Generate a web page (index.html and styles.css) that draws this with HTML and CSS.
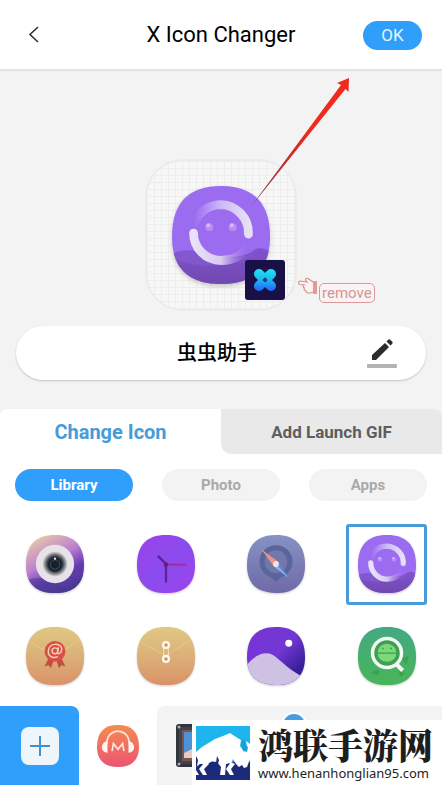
FILE: index.html
```html
<!DOCTYPE html>
<html lang="en">
<head>
<meta charset="utf-8">
<meta name="viewport" content="width=device-width, initial-scale=1">
<title>X Icon Changer</title>
<link rel="stylesheet" href="styles.css">
</head>
<body>
<svg class="defs" aria-hidden="true">
  <defs>
    <path id="squircle" d="M50 0C83 0 100 17 100 52C100 85 82 100 50 100C18 100 0 85 0 52C0 17 17 0 50 0Z"/>
    <clipPath id="clip"><use href="#squircle"/></clipPath>
    <linearGradient id="arcTop" x1="0" y1="0" x2="1" y2="0"><stop offset="0" stop-color="#c9b4f6" stop-opacity="0"/><stop offset=".5" stop-color="#cdbaf5"/><stop offset="1" stop-color="#e6e0f5"/></linearGradient>
    <linearGradient id="arcBottom" x1="0" y1="0" x2="1" y2="0"><stop offset="0" stop-color="#e9e2f8"/><stop offset=".5" stop-color="#d8cbef"/><stop offset="1" stop-color="#a37ae4" stop-opacity="0"/></linearGradient>
    <linearGradient id="gHill" x1="0" y1="0" x2="0" y2="1"><stop offset="0" stop-color="#8054cd"/><stop offset="1" stop-color="#7048b0"/></linearGradient>
    <linearGradient id="gLens" x1=".15" y1="0" x2=".7" y2="1"><stop offset="0" stop-color="#e9cfa4"/><stop offset=".45" stop-color="#bd7fd0"/><stop offset=".72" stop-color="#653bb0"/><stop offset="1" stop-color="#493a91"/></linearGradient>
    <radialGradient id="gPupil"><stop offset="0" stop-color="#1c2731"/><stop offset=".6" stop-color="#343d43"/><stop offset="1" stop-color="#e6e2e5"/></radialGradient>
    <linearGradient id="gClock" x1="0" y1="0" x2="1" y2="1"><stop offset="0" stop-color="#9a42ea"/><stop offset=".5" stop-color="#8b4bed"/><stop offset="1" stop-color="#9c43ee"/></linearGradient>
    <linearGradient id="gCompass" x1="0" y1="0" x2="0" y2="1"><stop offset="0" stop-color="#8593c3"/><stop offset="1" stop-color="#7069a8"/></linearGradient>
    <linearGradient id="gMail" x1="0" y1="0" x2="0" y2="1"><stop offset="0" stop-color="#dfc883"/><stop offset=".55" stop-color="#dbae76"/><stop offset="1" stop-color="#db9168"/></linearGradient>
    <linearGradient id="gNight" x1="0" y1="0" x2="1" y2="1"><stop offset="0" stop-color="#7933d7"/><stop offset=".5" stop-color="#7137d3"/><stop offset=".8" stop-color="#39209b"/></linearGradient>
    <linearGradient id="gGreen" x1="0" y1="0" x2="0" y2="1"><stop offset="0" stop-color="#43a982"/><stop offset="1" stop-color="#49b558"/></linearGradient>
    <linearGradient id="gMusic" x1="0" y1="0" x2="0" y2="1"><stop offset="0" stop-color="#f58b50"/><stop offset="1" stop-color="#ec5472"/></linearGradient>
    <linearGradient id="gX" gradientUnits="userSpaceOnUse" x1="0" y1="9" x2="0" y2="31"><stop offset="0" stop-color="#19e6ee"/><stop offset=".5" stop-color="#20b5f2"/><stop offset="1" stop-color="#2563f8"/></linearGradient>
    <linearGradient id="gArrow" gradientUnits="userSpaceOnUse" x1="0" y1="130" x2="99" y2="0"><stop offset="0" stop-color="#8b5ba0"/><stop offset=".12" stop-color="#963e47"/><stop offset=".4" stop-color="#c6302b"/><stop offset=".6" stop-color="#ee2b1d"/></linearGradient>
    <symbol id="smile" viewBox="0 0 100 100">
      <use href="#squircle" fill="#9b6bf0"/>
      <g clip-path="url(#clip)">
        <path d="M0 70C7 64 23 65 40 70C57 75 80 71 84 65C90 62 97 64 100 68V100H0Z" fill="url(#gHill)"/>
        <path d="M0 70C8 64 23 66 40 70C55 75 72 74 86 68C68 83 23 86 0 73Z" fill="#875bd3" opacity=".65"/>
      </g>
      <path d="M22 39C28 24 40 19 50 19A29 29 0 0 1 78 49" fill="none" stroke="url(#arcTop)" stroke-width="9" stroke-linecap="round"/>
      <path d="M22 48A28 28 0 0 0 50 76C63 76 73 70 78 59" fill="none" stroke="url(#arcBottom)" stroke-width="9" stroke-linecap="round"/>
      <circle cx="38" cy="42" r="4" fill="#b78df4"/><circle cx="62" cy="42" r="4" fill="#b78df4"/>
      <circle cx="37" cy="40" r="2" fill="#d4b8fa"/><circle cx="61" cy="40" r="2" fill="#d4b8fa"/>
    </symbol>
  </defs>
</svg>

<div class="app">
  <header class="header">
    <button class="back" aria-label="Back"><svg width="12" height="18" viewBox="0 0 12 18"><path d="M10 1L2 8.500L10 16" fill="none" stroke="#333" stroke-width="1.600"/></svg></button>
    <h1 class="title">X Icon Changer</h1>
    <button class="ok">OK</button>
  </header>

  <section class="stage">
    <div class="preview">
      <svg class="preview-icon" viewBox="0 0 100 100"><use href="#smile"/></svg>
      <svg class="badge" viewBox="0 0 40 40" aria-hidden="true">
        <rect width="40" height="40" rx="3" fill="#181047"/>
        <path d="M14 14L26 26M26 14L14 26" stroke="url(#gX)" stroke-width="10" stroke-linecap="round"/>
        <path d="M20 17L23 20L20 23L17 20Z" fill="#17447f" stroke="#2395dc"/>
      </svg>
      <svg class="arrow" viewBox="0 0 99 130" aria-hidden="true"><path d="M0 130L91 7L87 5L99 0L98.500 14L95.500 11Z" fill="url(#gArrow)"/></svg>
      <button class="remove">
        <svg width="22" height="20" viewBox="0 0 22 20" aria-hidden="true"><path d="M16 5L11 1.500C9 .8 8 2 9 4L10 5L3 4C1 4 1 7 3 7.500L7 8C5.500 9 6 10.500 7.500 11C6.500 12.500 7.500 13.500 9 14C9 15.500 11 16.500 13 16L16 15" fill="#fbf3f3" stroke="#d99393" stroke-width="1.200"/><path d="M16 4H20V17H16Z" fill="#e59a98"/></svg>
        <span class="remove-label">remove</span>
      </button>
    </div>
    <div class="name-box">
      <input class="name" type="text" value="虫虫助手" aria-label="App name">
      <button class="edit" aria-label="Edit name"><svg width="30" height="30" viewBox="0 0 30 30"><path d="M5 22V17L18 5L22 9L9 22ZM19.500 3.500L21.500 1.500Q22.500 1 23.500 2L25.500 4Q26 5 25 6L23.500 7.500Z" fill="#2c2c2e"/><rect y="26" width="30" height="4" rx="1" fill="#b3b3b3"/></svg></button>
    </div>
  </section>

  <main class="panel">
    <nav class="tabs">
      <button class="tab tab-active">Change Icon</button>
      <button class="tab">Add Launch GIF</button>
    </nav>
    <div class="chips">
      <button class="chip chip-active">Library</button>
      <button class="chip">Photo</button>
      <button class="chip">Apps</button>
    </div>
    <div class="icons">
      <button class="cell" aria-label="Camera"><svg class="icon" viewBox="0 0 100 100"><use href="#squircle" fill="url(#gLens)"/><path clip-path="url(#clip)" d="M0 78Q30 68 52 84T100 66V100H0Z" fill="#453b94" opacity=".55"/><circle cx="50" cy="50" r="33" fill="#e6e2e8"/><circle cx="50" cy="50" r="22" fill="url(#gPupil)"/><circle cx="50" cy="51" r="12" fill="#17212d"/><circle cx="50" cy="51" r="8" fill="none" stroke="#3b4655" stroke-width="2"/><circle cx="50" cy="41" r="2" fill="#dbe2e6"/></svg></button>
      <button class="cell" aria-label="Clock"><svg class="icon" viewBox="0 0 100 100"><use href="#squircle" fill="url(#gClock)"/><path d="M50 51H85" stroke="#9f2c96" stroke-width="3"/><path d="M50 82V50L36 36" fill="none" stroke="#5a258e" stroke-width="4"/><circle cx="50" cy="51" r="4" fill="#632078"/></svg></button>
      <button class="cell" aria-label="Compass"><svg class="icon" viewBox="0 0 100 100"><use href="#squircle" fill="url(#gCompass)"/><path d="M41 72H59L50 81Z" fill="#5d6398"/><circle cx="50" cy="46" r="24" fill="#7278ac" stroke="#59659b" stroke-width="9"/><path d="M25 25L54 46L46 54Z" fill="#e99586"/><path d="M54 46L73 75L46 54Z" fill="#5a86d9"/><path d="M50 50L73 75L46 54Z" fill="#8db2ea"/><circle cx="50" cy="50" r="5" fill="#f3e5e6"/></svg></button>
      <button class="cell cell-selected" aria-label="Smile" aria-pressed="true"><svg class="icon" viewBox="0 0 100 100"><use href="#smile"/></svg></button>
      <button class="cell" aria-label="Mail"><svg class="icon" viewBox="0 0 100 100"><use href="#squircle" fill="url(#gMail)"/><path d="M8 27L50 50L92 22" fill="none" stroke="#e4ca90" stroke-width="1.500"/><path d="M39 54L32 68L39 66L43 71L48 57ZM61 54L68 68L61 66L57 71L52 57Z" fill="#bf5143"/><circle cx="50" cy="42" r="18" fill="#d94e48"/><circle cx="50" cy="41" r="5" fill="none" stroke="#f6d0b1" stroke-width="2.500"/><path d="M56 35L54 44Q55 48 60 44C65 34 57 29 49 30C38 31 35 46 43 51Q48 54 55 51" fill="none" stroke="#f6d0b1" stroke-width="2.500"/></svg></button>
      <button class="cell" aria-label="Envelope"><svg class="icon" viewBox="0 0 100 100"><use href="#squircle" fill="url(#gMail)"/><path d="M8 27L50 50L92 22" fill="none" stroke="#e4ca90" stroke-width="1.500"/><path d="M46 31V55M54 31V55" stroke="#f3dfba" stroke-width="2"/><circle cx="50" cy="31" r="5" fill="#c99357" stroke="#fff8ea" stroke-width="4"/><circle cx="50" cy="55" r="5" fill="#c99357" stroke="#fff8ea" stroke-width="4"/></svg></button>
      <button class="cell" aria-label="Gallery"><svg class="icon" viewBox="0 0 100 100"><use href="#squircle" fill="url(#gNight)"/><path clip-path="url(#clip)" d="M0 65C14 49 29 41 44 48C58 57 70 72 91 83L100 86V100H0Z" fill="#cfc1e4"/><circle cx="72" cy="28" r="6" fill="#fff"/></svg></button>
      <button class="cell" aria-label="Search"><svg class="icon" viewBox="0 0 100 100"><use href="#squircle" fill="url(#gGreen)"/><path d="M76 55L87 50L84 65ZM22 79L35 73L36 83ZM70 75L80 80L73 86Z" fill="#3ca04c"/><path d="M65 63L77 75" stroke="#f0faf2" stroke-width="7"/><circle cx="50" cy="45" r="25" fill="#409f54" stroke="#f0faf2" stroke-width="6"/><path d="M34 44A16 15 0 0 1 66 44ZM34 46H66A16 14 0 0 1 34 46Z" fill="#7bd87b"/><circle cx="43" cy="37" r="1.500" fill="#3c9650"/><circle cx="57" cy="37" r="1.500" fill="#3c9650"/></svg></button>
    </div>
  </main>

  <footer class="dock">
    <button class="add" aria-label="Add"><svg width="38" height="38" viewBox="0 0 38 38"><rect width="38" height="38" rx="8" fill="#eef6fc"/><path d="M19 9V29M9 19H29" stroke="#408fcf" stroke-width="2"/></svg></button>
    <button class="pack" aria-label="Music pack"><svg width="42" height="42" viewBox="0 0 100 100"><use href="#squircle" fill="url(#gMusic)"/><path d="M23 46C23 4 77 4 77 46" fill="none" stroke="#ffe8dc" stroke-width="4"/><path d="M25 38V66C7 65 7 41 25 38ZM75 38V66C93 65 93 41 75 38Z" fill="#fff5ee"/><path d="M36 62L39 44L50 58L61 44L64 62" fill="none" stroke="#ffeadd" stroke-width="4"/></svg></button>
    <div class="packs">
      <svg width="42" height="43" viewBox="0 0 42 43" aria-hidden="true"><rect width="42" height="43" rx="3" fill="#30343d"/><rect x="3" y="3" width="36" height="37" fill="#3f444d"/><rect x="6" y="6" width="30" height="31" fill="#76564f"/><rect x="8" y="8" width="26" height="26" fill="#4d91d8"/><path d="M8 29L20 23L34 29V34H8Z" fill="#e8cabe"/><circle cx="3" cy="3" r="1.500" fill="#a9adb5"/><circle cx="3" cy="40" r="1.500" fill="#a9adb5"/></svg>
      <span class="dot"></span>
    </div>
    <div class="brand">
      <svg class="brand-logo" width="54" height="54" viewBox="0 0 54 54" aria-hidden="true">
        <rect width="54" height="54" fill="#1eb5ec"/>
        <path d="M0 36H54V54H0Z" fill="#1b2a7b"/>
        <path d="M0 26L6 21L19 13L27 10L34 7L40 11L45 14L44 20L48 26L51 20L50 15L54 18V33L51 41L48 42L46 39L43 41L40 38L37 33L35 37L30 38L29 49H24L25 41L21 36L16 35L12 38H4L0 41Z" fill="#fff"/>
        <path d="M0 30L2 34L1 40L0 41ZM21 30L23 34L22 38L20 37Z" fill="#1b2a7b"/>
        <path d="M47 13L45 19L48 25L51 26L52 21L49 19L49 15Z" fill="#1b9fd8"/>
        <path d="M8 37L3 43L7 49H11L8 43L13 38ZM35 36L30 43L34 49H38L35 43L39 38Z" fill="#fff"/>
        <path d="M0 44L3 49H0Z" fill="#fff"/>
      </svg>
      <div class="brand-text">
        <strong class="brand-name" lang="zh-CN">鸿联手游网</strong>
        <span class="brand-url">www.henanhonglian95.com</span>
      </div>
    </div>
  </footer>
</div>
</body>
</html>
```

FILE: styles.css
```css
* {
  box-sizing: border-box;
}

body {
  margin: 0;
  background: #fff;
  font-family: Roboto, "Noto Sans CJK SC", sans-serif;
}

button {
  padding: 0;
  border: 0;
  background: none;
  font: inherit;
  color: inherit;
}

svg {
  display: block;
}

.defs {
  position: absolute;
  width: 0;
  height: 0;
}

.app {
  display: flex;
  flex-direction: column;
  min-height: 100vh;
  overflow: hidden;
}

.header {
  display: grid;
  grid-template-columns: 59px 1fr 59px;
  align-items: center;
  height: 71px;
  padding: 1px 20px 0;
  border-bottom: 2px solid #e3e3e3;
}

.back {
  padding: 8px;
  justify-self: start;
}

.title {
  margin: 0;
  font-size: 22px;
  font-weight: 400;
  line-height: 28px;
  text-align: center;
  white-space: nowrap;
}

.ok {
  height: 29px;
  border-radius: 15px;
  background: #2f9ffb;
  color: #e8f5ff;
  font-size: 17px;
}

.stage {
  display: flex;
  flex-direction: column;
  align-items: center;
  gap: 15px;
  padding: 88px 16px 29px;
  background: #f3f3f3;
}

.preview {
  position: relative;
  display: grid;
  place-items: center;
  width: 152px;
  height: 152px;
  border: 2px solid #ebebeb;
  border-radius: 38px;
  background:
    repeating-linear-gradient(90deg, #ededed 0 1px, transparent 1px 7px),
    repeating-linear-gradient(#ededed 0 1px, transparent 1px 7px),
    #f7f7f7;
}

.preview-icon {
  width: 98px;
  height: 98px;
  filter: drop-shadow(0 2px 2px #0003);
}

.badge {
  position: absolute;
  left: 98px;
  top: 99px;
  width: 40px;
  height: 40px;
}

.arrow {
  position: absolute;
  left: 103px;
  top: -83px;
  width: 99px;
  height: 130px;
}

.remove {
  position: absolute;
  left: 150px;
  top: 116px;
  display: flex;
}

.remove-label {
  margin-top: 6px;
  padding: 0 2px;
  height: 20px;
  border: 1px solid #dc9999;
  border-radius: 5px;
  background: #fbf3f3;
  color: #d19696;
  font-size: 15px;
  line-height: 19px;
}

.name-box {
  display: flex;
  align-items: center;
  align-self: stretch;
  height: 54px;
  padding: 0 29px 0 51px;
  border-radius: 27px;
  background: #fff;
  box-shadow: 0 1px 2px #0003;
}

.name {
  flex: 1;
  min-width: 0;
  padding: 0;
  border: 0;
  background: none;
  color: #000;
  font: 500 20px/26px Roboto, "Noto Sans CJK SC", sans-serif;
  text-align: center;
}

.panel {
  background: linear-gradient(#f3f3f3 10px, #fff 10px);
}

.tabs {
  display: grid;
  grid-template-columns: 1fr 1fr;
  height: 45px;
  border-radius: 8px 8px 0 0;
  background: #fff;
}

.tab {
  border-radius: 0 8px 0 10px;
  background: #e9e9e9;
  color: #5e5e5e;
  font-size: 17px;
  font-weight: 700;
}

.tab-active {
  border-radius: 8px 8px 0 0;
  background: #fff;
  color: #479cd6;
  font-size: 20px;
}

.chips {
  display: grid;
  grid-template-columns: repeat(3, 1fr);
  gap: 29px;
  padding: 15px 15px 17px;
}

.chip {
  height: 32px;
  border-radius: 16px;
  background: #f3f3f3;
  color: #a9a9a9;
  font-size: 15px;
  font-weight: 700;
}

.chip-active {
  background: #2f9ffb;
  color: #fff;
}

.icons {
  display: grid;
  grid-template-columns: repeat(4, 1fr);
  grid-auto-rows: 92px;
  place-items: center;
}

.cell {
  display: grid;
  place-items: center;
  width: 81px;
  height: 81px;
}

.cell-selected {
  border: 3px solid #479cd9;
  border-radius: 3px;
}

.icon {
  width: 58px;
  height: 58px;
  filter: drop-shadow(0 1px 1px #0003);
}

.dock {
  position: relative;
  flex: 1;
  display: grid;
  grid-template-columns: 79px 78px 1fr;
  min-height: 79px;
  margin-top: 4px;
}

.add {
  display: grid;
  place-items: center;
  border-radius: 0 8px 0 0;
  background: #2f9ffb;
}

.pack {
  display: grid;
  place-items: center;
}

.packs {
  position: relative;
  display: flex;
  align-items: center;
  padding-left: 19px;
  border-radius: 8px 0 0 0;
  background: #f3f3f3;
}

.dot {
  position: absolute;
  left: 124px;
  top: 6px;
  width: 26px;
  height: 26px;
  border: 2px solid #fff;
  border-radius: 50%;
  background: #479de0;
}

.brand {
  position: absolute;
  left: 192px;
  right: 0;
  bottom: 0;
  display: flex;
  gap: 8px;
  height: 65px;
  padding: 6px 0 0 4px;
  background: #fff;
}

.brand-text {
  display: flex;
  flex-direction: column;
  gap: 3px;
  color: #1e1e1e;
  white-space: nowrap;
}

.brand-name {
  font-family: "Noto Serif CJK SC", "Noto Sans CJK SC", serif;
  font-size: 35px;
  font-weight: 900;
  line-height: 36px;
}

.brand-url {
  font-family: "Noto Sans", sans-serif;
  font-size: 13px;
  font-weight: 400;
  line-height: 16px;
}
```
